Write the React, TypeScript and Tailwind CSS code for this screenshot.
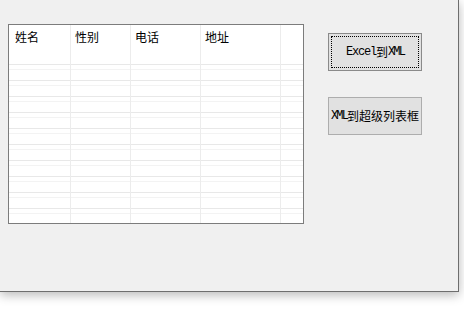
const columns = [
  { title: "姓名", width: "w-[62px]", pad: "pl-[6px]" },
  { title: "性别", width: "w-[60px]", pad: "pl-[4px]" },
  { title: "电话", width: "w-[70px]", pad: "pl-[4px]" },
  { title: "地址", width: "w-[80px]", pad: "pl-[4px]" },
];

const rows = Array.from({ length: 11 });

function GridRows() {
  return (
    <>
      {rows.map((_, r) => (
        <div key={r} className="h-[16px] shrink-0 border-b border-[#e8e8e8]">
          {r > 0 && (
            <>
              <div className="h-[4px]" />
              <div className="border-t border-[#f3f3f3]" />
            </>
          )}
        </div>
      ))}
    </>
  );
}

function GridTable() {
  return (
    <div className="w-[296px] h-[200px] border border-[#7c7c7c] bg-white overflow-hidden">
      <div className="flex h-full">
        {columns.map((col, i) => (
          <div key={i} className={`${col.width} h-full border-r border-[#ececec] flex flex-col`}>
            <div className={`h-[24px] shrink-0 ${col.pad} pt-[5px] text-[12px] leading-[14px] text-black`}>
              {col.title}
            </div>
            <GridRows />
          </div>
        ))}
        <div className="flex-1 h-full flex flex-col">
          <div className="h-[24px] shrink-0" />
          <GridRows />
        </div>
      </div>
    </div>
  );
}

export default function App() {
  return (
    <div
      className="w-[464px] h-[321px] bg-white overflow-hidden"
      style={{ fontFamily: '"Noto Sans CJK SC", "Liberation Sans", sans-serif' }}
    >
      <div className="w-[459px] h-[292px] bg-[#f0f0f0] border-r border-b border-[#6e6e6e] shadow-[0_3px_10px_rgba(0,0,0,0.28)] flex items-start pl-[8px] pt-[24px]">
        <GridTable />

        {/* Buttons */}
        <div className="ml-[24px] mt-[9px] flex flex-col gap-[26px]">
          <button className="w-[94px] h-[38px] bg-[#e1e1e1] border border-[#8a8a8a] p-[2px] flex">
            <span className="flex-1 flex items-center justify-center border border-dotted border-black text-[12px] leading-none text-black">
              <span className="font-['Liberation_Mono'] tracking-[-1.2px]">Excel</span>
              <span>到</span>
              <span className="font-['Liberation_Mono'] tracking-[-1.8px]">XML</span>
            </span>
          </button>
          <button className="w-[94px] h-[38px] bg-[#e1e1e1] border border-[#adadad] flex items-center justify-center text-[12px] leading-none text-black whitespace-nowrap">
            <span className="font-['Liberation_Mono'] tracking-[-1.8px]">XML</span>
            <span>到超级列表框</span>
          </button>
        </div>
      </div>
    </div>
  );
}
